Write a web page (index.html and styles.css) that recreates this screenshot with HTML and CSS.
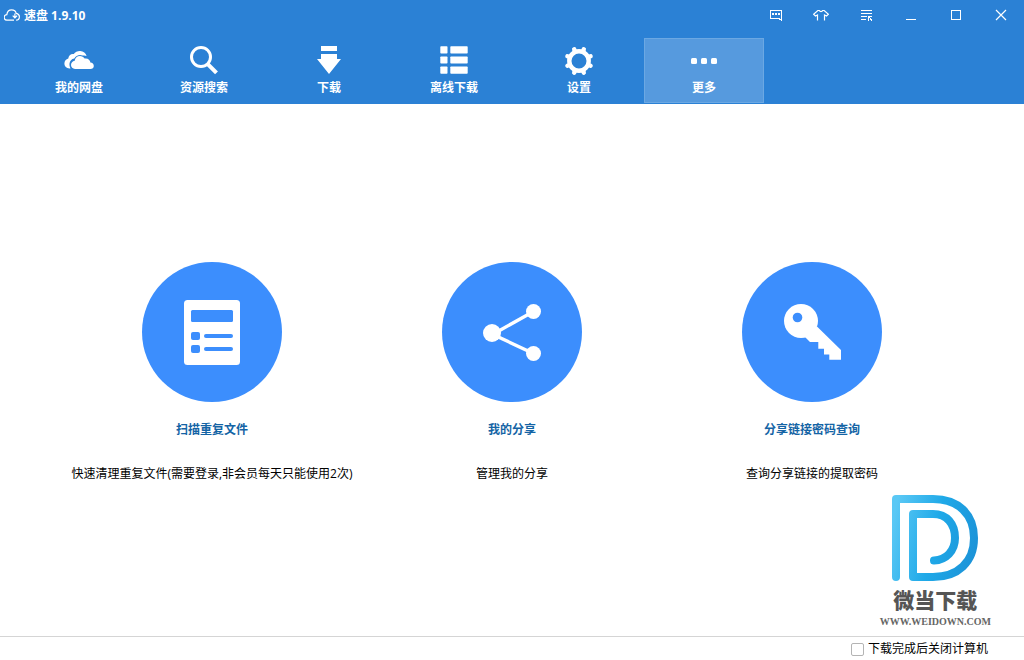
FILE: index.html
```html
<!DOCTYPE html>
<html lang="zh-CN">
<head>
<meta charset="utf-8">
<title>速盘 1.9.10</title>
<link rel="stylesheet" href="styles.css">
</head>
<body>
<div class="window">
  <header class="header">
    <div class="titlebar">
      <svg class="app-logo" viewBox="0 0 16 12" fill="none" stroke="#fff" stroke-width="1.2"><path d="M10 11.200H3.200A2.600 2.600 0 0 1 2.800 5.600C3.200 2.600 5 .8 7.600 .8 10 .8 11.800 2.200 12.200 4.300c2 .4 3.200 1.700 3.200 3.500 0 1.900-1.300 3.400-3.300 3.400M10.900 4.500v4.300M8.700 6.600l2.200 2.200 2.200-2.200"/></svg>
      <h1 class="app-title">速盘 1.9.10</h1>
      <div class="controls">
        <button class="control" type="button" aria-label="反馈"><svg viewBox="0 0 16 16" fill="none" stroke="#fff" shape-rendering="crispEdges"><path d="M2.500 3.500h11v9.500l-3-1.500h-8z"/><path d="M4 7h2M7 7h2M10 7h2" stroke-width="2"/></svg></button>
        <button class="control" type="button" aria-label="皮肤"><svg viewBox="0 0 16 16" fill="none" stroke="#fff" stroke-width="1.200"><path d="M4.500 13.500V8L2.500 9 .6 7.200 4.800 3.500h1.500C7 5 9 5 9.700 3.500h1.500l4.200 3.700L13.500 9l-2-1v5.500"/></svg></button>
        <button class="control" type="button" aria-label="菜单"><svg viewBox="0 0 16 16" fill="none" stroke="#fff" shape-rendering="crispEdges"><path d="M3 3.500h11M3 6.500h11M3 9.500h6M3 12.500h5"/><path d="M10.500 14V9.500H14M11 10l3 3.500"/></svg></button>
        <button class="control" type="button" aria-label="最小化"><svg viewBox="0 0 16 16" stroke="#fff" shape-rendering="crispEdges"><path d="M3 12.500h10"/></svg></button>
        <button class="control" type="button" aria-label="最大化"><svg viewBox="0 0 16 16" fill="none" stroke="#fff" shape-rendering="crispEdges"><path d="M3.500 3.500h9v9h-9z"/></svg></button>
        <button class="control" type="button" aria-label="关闭"><svg viewBox="0 0 16 16" stroke="#fff" stroke-width="1.200"><path d="M3 3l10 10M13 3L3 13"/></svg></button>
      </div>
    </div>
    <nav class="nav">
      <button class="tab" type="button">
        <svg class="tab-icon" viewBox="0 0 32 32" fill="#fff"><path d="M6.500 24.500C3.500 24.300 1.400 22.300 1.400 19.500c0-2.500 1.600-4.400 3.900-4.900C5.500 11.500 8 9.600 10.800 10.100 12.200 8 14.500 6.900 17.200 7c3.200.2 5.600 2.200 6.400 4.900-1.300-.5-2.600-.7-4-.3-3-1.300-6.700-.2-8.300 3-2.700.4-4.500 2.400-4.800 5-.2 1.900.3 3.500 1 4.900z"/><path d="M12 25c-2.300 0-4-1.700-4-3.900 0-2.200 1.500-3.900 3.700-4.300.4-3 2.500-4.900 5.200-4.900 2 0 3.800 1 4.700 2.700 3-.7 5.600 1.100 5.800 4 2 .2 3.400 1.500 3.400 3.300 0 1.800-1.400 3.100-3.400 3.100z"/></svg>
        <span class="tab-label">我的网盘</span>
      </button>
      <button class="tab" type="button">
        <svg class="tab-icon" viewBox="0 0 32 32" fill="none" stroke="#fff"><circle cx="13" cy="13" r="9.500" stroke-width="3"/><path d="M19.500 19.800l9 9" stroke-width="4"/></svg>
        <span class="tab-label">资源搜索</span>
      </button>
      <button class="tab" type="button">
        <svg class="tab-icon" viewBox="0 0 32 32" fill="#fff"><path d="M8 2h16v5H8zM8 10h16v5h4L16 30 4 15h4z"/></svg>
        <span class="tab-label">下载</span>
      </button>
      <button class="tab" type="button">
        <svg class="tab-icon" viewBox="0 0 32 32" fill="#fff"><rect x="2.300" y="2.300" width="7.200" height="7.200" rx=".8"/><rect x="12.300" y="2.300" width="17.400" height="7.200" rx=".8"/><rect x="2.300" y="12.400" width="7.200" height="7.200" rx=".8"/><rect x="12.300" y="12.400" width="17.400" height="7.200" rx=".8"/><rect x="2.300" y="22.500" width="7.200" height="7.200" rx=".8"/><rect x="12.300" y="22.500" width="17.400" height="7.200" rx=".8"/></svg>
        <span class="tab-label">离线下载</span>
      </button>
      <button class="tab" type="button">
        <svg class="tab-icon" viewBox="0 0 32 32" fill="none" stroke="#fff"><circle cx="16" cy="17" r="9.700" stroke-width="4.400"/><g stroke-width="4.400" stroke-linecap="round"><path d="M20.200 6.900l.6-1.500M26.100 12.800l1.500-.6M26.100 21.200l1.500.6M20.200 27.100l.6 1.500M11.800 27.100l-.6 1.500M5.900 21.200l-1.500.6M5.900 12.800l-1.500-.6M11.800 6.900l-.6-1.500"/></g></svg>
        <span class="tab-label">设置</span>
      </button>
      <button class="tab tab-active" type="button" aria-current="page">
        <svg class="tab-icon" viewBox="0 0 32 32" fill="#fff"><rect x="3" y="14" width="6" height="6" rx="1.500"/><rect x="13" y="14" width="6" height="6" rx="1.500"/><rect x="23" y="14" width="6" height="6" rx="1.500"/></svg>
        <span class="tab-label">更多</span>
      </button>
    </nav>
  </header>

  <main class="tools">
    <section class="tool">
      <button class="tool-button" type="button" aria-label="扫描重复文件">
        <svg viewBox="0 0 140 140"><rect x="42" y="38" width="56" height="65" rx="3.500" fill="#fff"/><g fill="#3c8efd"><rect x="49" y="48" width="42" height="12" rx="1.500"/><rect x="49" y="70" width="9" height="8" rx="2"/><rect x="49" y="83" width="9" height="8" rx="2"/><rect x="62" y="72" width="29" height="4" rx="2"/><rect x="62" y="85" width="29" height="4" rx="2"/></g></svg>
      </button>
      <h2 class="tool-title">扫描重复文件</h2>
      <p class="tool-text">快速清理重复文件(需要登录,非会员每天只能使用2次)</p>
    </section>
    <section class="tool">
      <button class="tool-button" type="button" aria-label="我的分享">
        <svg viewBox="0 0 140 140" fill="#fff"><path d="M91.500 49.500L54 70.500M52 73l39.500 18.500" fill="none" stroke="#fff" stroke-width="3.400"/><circle cx="50" cy="71" r="9"/><circle cx="91.500" cy="49.500" r="7.500"/><circle cx="91.500" cy="91.500" r="7.500"/></svg>
      </button>
      <h2 class="tool-title">我的分享</h2>
      <p class="tool-text">管理我的分享</p>
    </section>
    <section class="tool">
      <button class="tool-button" type="button" aria-label="分享链接密码查询">
        <svg viewBox="0 0 140 140" fill="#fff"><circle cx="59" cy="59" r="17"/><path d="M75 64.500L99 88v9.700H87.300v-5.200H82v-5.800h-5.700V80H68l-6-6z"/><circle cx="55.500" cy="55.500" r="4.800" fill="#3c8efd"/></svg>
      </button>
      <h2 class="tool-title">分享链接密码查询</h2>
      <p class="tool-text">查询分享链接的提取密码</p>
    </section>
  </main>

  <footer class="statusbar">
    <label class="shutdown"><input class="shutdown-box" type="checkbox">下载完成后关闭计算机</label>
    <div class="brand">
      <svg class="brand-logo" viewBox="0 0 86 88" fill="none" stroke="url(#brand-blue)" stroke-width="8" stroke-linecap="round" stroke-linejoin="round">
        <defs><linearGradient id="brand-blue" gradientUnits="userSpaceOnUse" x1="0" y1="30" x2="86" y2="50"><stop offset="0" stop-color="#5ac8f5"/><stop offset=".5" stop-color="#1fa9e8"/><stop offset="1" stop-color="#1c93d8"/></linearGradient></defs>
        <path d="M4 83V5h37c25 0 41 15 41 39S66 83 41 83H21V20h20c14 0 22 10 22 24 0 13-9 22-21 22.500"/>
      </svg>
      <div class="brand-name">微当下载</div>
      <div class="brand-url">WWW.WEIDOWN.COM</div>
    </div>
  </footer>
</div>
</body>
</html>
```
FILE: styles.css
```css
* {
  box-sizing: border-box;
}

body {
  margin: 0;
  background: #fff;
  color: #000;
  font: 12px/16px "Open Sans", "Noto Sans CJK SC", sans-serif;
}

button {
  margin: 0;
  padding: 0;
  border: 0;
  background: none;
  color: inherit;
  font: inherit;
}

h1,
h2,
p {
  margin: 0;
  font-size: 12px;
}

.window {
  display: flex;
  flex-direction: column;
  min-height: 100vh;
}

.header {
  background: #2b81d5;
  color: #fff;
}

.titlebar {
  display: flex;
  align-items: center;
  gap: 4px;
  height: 30px;
  padding: 0 1px 0 4px;
}

.app-logo {
  width: 16px;
  height: 12px;
}

.app-title {
  padding-top: 2px;
}

.controls {
  display: flex;
  margin-left: auto;
}

.control {
  display: flex;
  align-items: center;
  justify-content: center;
  width: 45px;
  height: 30px;
}

.control svg {
  width: 16px;
  height: 16px;
}

.nav {
  display: flex;
  gap: 5px;
  padding: 8px 19px 1px;
}

.tab {
  display: flex;
  flex-direction: column;
  align-items: center;
  gap: 4px;
  width: 120px;
  height: 65px;
  padding-top: 5px;
  border: 1px solid transparent;
  font-weight: bold;
}

.tab-active {
  border-color: #6ba8e3;
  background: #569ade;
}

.tab-icon {
  width: 32px;
  height: 32px;
}

.tools {
  display: grid;
  flex: 1;
  grid-template-columns: repeat(3, 300px);
  align-content: center;
  justify-content: center;
  padding-top: 4px;
}

.tool {
  display: flex;
  flex-direction: column;
  align-items: center;
}

.tool-button {
  width: 140px;
  height: 140px;
  border-radius: 50%;
  background: #3c8efd;
}

.tool-button svg {
  display: block;
}

.tool-title {
  margin-top: 20px;
  color: #1464a5;
}

.tool-text {
  margin-top: 28px;
  white-space: nowrap;
}

.statusbar {
  position: relative;
  display: flex;
  justify-content: flex-end;
  padding: 4px 36px 3px;
  border-top: 1px solid #d5d5d5;
}

.shutdown {
  display: flex;
  align-items: center;
  gap: 4px;
}

.shutdown-box {
  width: 13px;
  height: 13px;
  margin: 0;
  border: 1px solid #b4b4b4;
  border-radius: 2px;
  background: #fff;
  appearance: none;
}

.shutdown-box:checked {
  background: #2b81d5;
}

.brand {
  position: absolute;
  right: 33px;
  bottom: 30px;
  display: flex;
  flex-direction: column;
  align-items: center;
  color: #555;
}

.brand-logo {
  width: 86px;
  height: 88px;
}

.brand-name {
  margin: 6px 0 2px;
  font-size: 21px;
  font-weight: 900;
  line-height: 24px;
}

.brand-url {
  color: #666;
  font: bold 10px/16px "Liberation Serif", serif;
}
```
